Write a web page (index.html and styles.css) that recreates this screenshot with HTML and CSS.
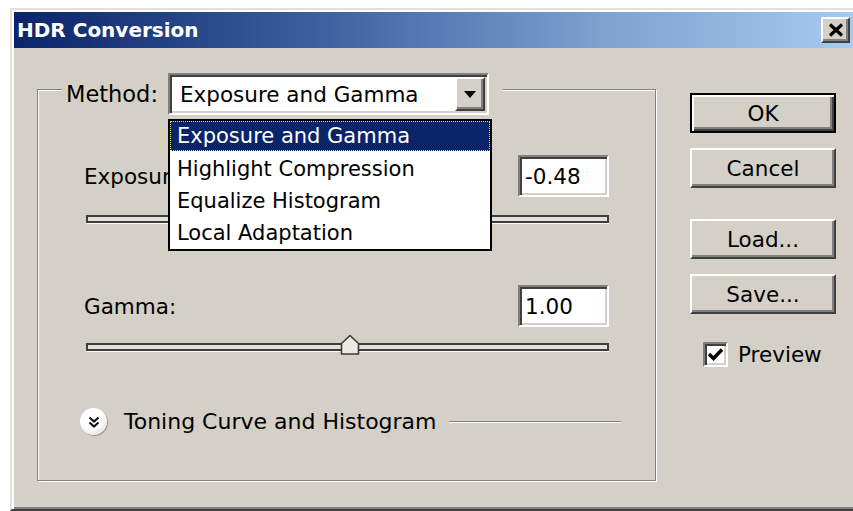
FILE: index.html
```html
<!DOCTYPE html>
<html lang="en">
<head>
<meta charset="utf-8">
<title>HDR Conversion</title>
<link rel="stylesheet" href="styles.css">
</head>
<body>
<div class="window">
  <div class="titlebar">
    <span class="title">HDR Conversion</span>
    <button class="close-btn" type="button" aria-label="Close">
      <svg width="16" height="14" viewBox="0 0 16 14"><path d="M2 1.5 L14 12.5 M14 1.5 L2 12.5" stroke="#000" stroke-width="3.2"/></svg>
    </button>
  </div>

  <div class="dialog-body">
    <div class="group">
      <div class="group-head">
        <span class="label method-label">Method:</span>
        <div class="combo">
          <div class="combo-field">
            <span class="combo-value">Exposure and Gamma</span>
            <span class="combo-arrow">
              <svg width="12" height="7" viewBox="0 0 12 7"><path d="M0 0 H12 L6 7 Z" fill="#000"/></svg>
            </span>
          </div>
          <ul class="combo-list">
            <li class="selected">Exposure and Gamma</li>
            <li>Highlight Compression</li>
            <li>Equalize Histogram</li>
            <li>Local Adaptation</li>
          </ul>
        </div>
      </div>

      <div class="param-row first">
        <span class="label">Exposure:</span>
        <div class="num-field">-0.48</div>
      </div>
      <div class="track">
        <svg class="thumb" style="left: calc(49% - 10px)" width="20" height="21" viewBox="0 0 20 21"><path d="M1.5 20 V9.5 L10 1.5 L18.5 9.5 V20 Z" fill="#ebe9e4" stroke="#3a3a3a" stroke-width="1.6" stroke-linejoin="round"/></svg>
      </div>

      <div class="param-row">
        <span class="label">Gamma:</span>
        <div class="num-field">1.00</div>
      </div>
      <div class="track">
        <svg class="thumb" style="left: calc(50.5% - 10px)" width="20" height="21" viewBox="0 0 20 21"><path d="M1.5 20 V9.5 L10 1.5 L18.5 9.5 V20 Z" fill="#ebe9e4" stroke="#3a3a3a" stroke-width="1.6" stroke-linejoin="round"/></svg>
      </div>

      <div class="toning-row">
        <span class="expand-icon">
          <svg width="14" height="14" viewBox="0 0 14 14"><path d="M2.5 2.5 L7 6.5 L11.5 2.5 M2.5 7.5 L7 11.5 L11.5 7.5" fill="none" stroke="#111" stroke-width="2.2"/></svg>
        </span>
        <span class="label">Toning Curve and Histogram</span>
        <span class="rule"></span>
      </div>
    </div>

    <div class="actions">
      <button class="btn btn-default" type="button">OK</button>
      <button class="btn" type="button">Cancel</button>
      <button class="btn gap-large" type="button">Load...</button>
      <button class="btn" type="button">Save...</button>
      <label class="check">
        <span class="check-box">
          <svg width="17" height="15" viewBox="0 0 17 15"><path d="M2 7 L6.5 11.5 L15 2.5" fill="none" stroke="#000" stroke-width="3.4"/></svg>
        </span>
        <span class="check-text">Preview</span>
      </label>
    </div>
  </div>
</div>
</body>
</html>
```

FILE: styles.css
```css
html, body {
  margin: 0;
  padding: 0;
  background: #fff;
  overflow: hidden;
}

body {
  font-family: "DejaVu Sans", Verdana, sans-serif;
  font-size: 21.5px;
  color: #000;
}

/* dialog frame */
.window {
  box-sizing: border-box;
  width: 847px;
  height: 503px;
  margin: 8px 0 0 10px;
  padding: 2px;
  background: #d4d0c8;
  border: 2px solid;
  border-color: #e4e1da #404040 #404040 #e4e1da;
  box-shadow: inset 2px 2px #fff, inset -2px -2px #808080;
  display: flex;
  flex-direction: column;
}

.titlebar {
  height: 36px;
  flex: none;
  display: flex;
  align-items: center;
  justify-content: space-between;
  padding: 0 3px;
  background: linear-gradient(to right, #0a246a, #3a5e9c 35%, #7ea1d0 70%, #a6caf0);
}

.title {
  font-weight: bold;
  font-size: 20px;
  color: #fff;
}

.close-btn {
  box-sizing: border-box;
  width: 29px;
  height: 26px;
  padding: 0;
  display: flex;
  align-items: center;
  justify-content: center;
  background: #d4d0c8;
  border: 2px solid;
  border-color: #fff #404040 #404040 #fff;
  box-shadow: inset -2px -2px #808080;
}

.dialog-body {
  flex: 1;
  display: flex;
  align-items: flex-start;
  padding-left: 23px;
}

/* etched group box */
.group {
  box-sizing: border-box;
  width: 619px;
  height: 392px;
  margin-top: 41px;
  padding: 0 46px;
  border: 1px solid #808080;
  box-shadow: inset 1px 1px #fff, 1px 1px #fff;
  display: flex;
  flex-direction: column;
}

.group-head {
  align-self: flex-start;
  display: flex;
  align-items: center;
  gap: 10px;
  margin: -17px 0 0 -22px;
  padding: 0 14px 0 4px;
  background: #d4d0c8;
}

.method-label {
  width: 92px;
  font-size: 22.5px;
}

/* combo box */
.combo {
  position: relative;
  width: 321px;
  height: 42px;
}

.combo-field,
.num-field,
.check-box {
  background: #fff;
  border: 2px solid;
  border-color: #808080 #fff #fff #808080;
  box-shadow: inset 2px 2px #404040, inset -2px -2px #d4d0c8;
}

.combo-field {
  box-sizing: border-box;
  height: 42px;
  display: flex;
  align-items: center;
  padding: 2px 2px 2px 10px;
}

.combo-arrow {
  box-sizing: border-box;
  margin-left: auto;
  width: 30px;
  height: 100%;
  display: flex;
  align-items: center;
  justify-content: center;
  background: #d4d0c8;
  border: 2px solid;
  border-color: #fff #404040 #404040 #fff;
  box-shadow: inset -2px -2px #808080;
}

.combo-list {
  position: absolute;
  z-index: 2;
  top: 46px;
  left: 0;
  box-sizing: border-box;
  width: 324px;
  margin: 0;
  padding: 0;
  list-style: none;
  background: #fff;
  border: 2px solid #000;
  font-size: 21px;
}

.combo-list li {
  box-sizing: border-box;
  height: 32px;
  display: flex;
  align-items: center;
  padding-left: 7px;
}

.combo-list li.selected {
  height: 30px;
  margin-bottom: 2px;
  padding-left: 6px;
  background: #0a246a;
  color: #fff;
  border: 1px dotted #e8d86c;
}

/* parameter rows */
.param-row {
  display: flex;
  align-items: center;
  justify-content: space-between;
  margin-top: 62px;
}

.param-row.first {
  margin-top: 40px;
}

.num-field {
  box-sizing: border-box;
  width: 91px;
  height: 42px;
  display: flex;
  align-items: center;
  padding-left: 5px;
}

.track {
  position: relative;
  box-sizing: border-box;
  height: 8px;
  margin: 16px 0 0 2px;
  background: #e4e1db;
  border: 2px solid #3c3c3c;
  box-shadow: 0 1px #fff;
}

.param-row.first + .track {
  margin-top: 18px;
}

.thumb {
  position: absolute;
  top: -11px;
}

/* collapsible section header */
.toning-row {
  display: flex;
  align-items: center;
  margin: 57px -12px 0 -4px;
}

.expand-icon {
  box-sizing: border-box;
  width: 27px;
  height: 27px;
  border-radius: 50%;
  display: flex;
  align-items: center;
  justify-content: center;
  background: radial-gradient(circle at 40% 35%, #ffffff 45%, #e6e4e0 80%, #c9c6c0 100%);
  box-shadow: 1px 1px 1px #9a968e;
}

.toning-row .label {
  margin-left: 17px;
  font-size: 22px;
}

.rule {
  flex: 1;
  height: 0;
  margin-left: 12px;
  border-top: 1px solid #808080;
  border-bottom: 1px solid #fff;
}

/* buttons column */
.actions {
  width: 146px;
  margin: 45px 0 0 34px;
  display: flex;
  flex-direction: column;
}

.btn {
  box-sizing: border-box;
  width: 146px;
  height: 40px;
  margin-bottom: 15px;
  padding: 0;
  font-family: "DejaVu Sans", Verdana, sans-serif;
  font-size: 21.5px;
  color: #000;
  background: #d4d0c8;
  border: 2px solid;
  border-color: #fff #404040 #404040 #fff;
  box-shadow: inset -2px -2px #808080;
}

.btn-default {
  border: 2px solid #000;
  box-shadow: inset 2px 2px #fff, inset -2px -2px #404040, inset -4px -4px #808080;
}

.btn.gap-large {
  margin-top: 16px;
}

.check {
  display: flex;
  align-items: center;
  margin: 13px 0 0 13px;
  gap: 10px;
}

.check-box {
  box-sizing: border-box;
  width: 25px;
  height: 25px;
  display: flex;
  align-items: center;
  justify-content: center;
}
```
